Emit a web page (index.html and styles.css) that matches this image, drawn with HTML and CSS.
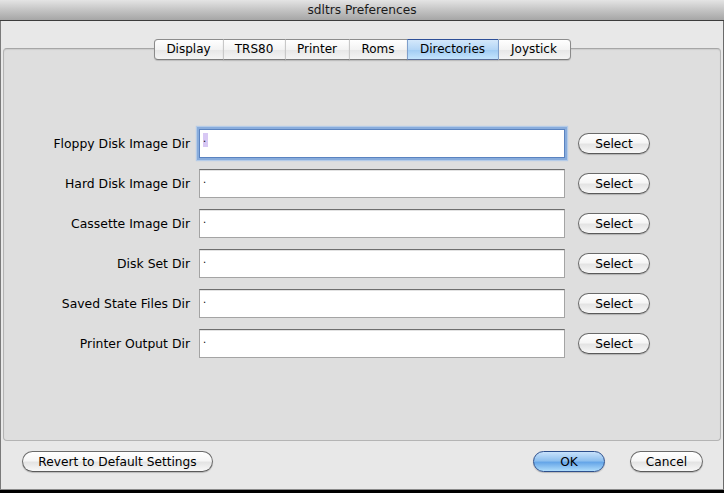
FILE: index.html
```html
<!DOCTYPE html>
<html>
<head>
<meta charset="utf-8">
<title>sdltrs Preferences</title>
<link rel="stylesheet" href="styles.css">
</head>
<body>
<div class="window">
  <div class="titlebar">sdltrs Preferences</div>
  <div class="body">
    <div class="panel">
      <div class="tabs">
        <div class="tab">Display</div>
        <div class="tab">TRS80</div>
        <div class="tab">Printer</div>
        <div class="tab">Roms</div>
        <div class="tab active">Directories</div>
        <div class="tab">Joystick</div>
      </div>
      <div class="rows">
        <div class="row">
          <label class="label">Floppy Disk Image Dir</label>
          <div class="field focused"><span class="sel">.</span></div>
          <button class="btn">Select</button>
        </div>
        <div class="row">
          <label class="label">Hard Disk Image Dir</label>
          <div class="field"><span class="val">.</span></div>
          <button class="btn">Select</button>
        </div>
        <div class="row">
          <label class="label">Cassette Image Dir</label>
          <div class="field"><span class="val">.</span></div>
          <button class="btn">Select</button>
        </div>
        <div class="row">
          <label class="label">Disk Set Dir</label>
          <div class="field"><span class="val">.</span></div>
          <button class="btn">Select</button>
        </div>
        <div class="row">
          <label class="label">Saved State Files Dir</label>
          <div class="field"><span class="val">.</span></div>
          <button class="btn">Select</button>
        </div>
        <div class="row">
          <label class="label">Printer Output Dir</label>
          <div class="field"><span class="val">.</span></div>
          <button class="btn">Select</button>
        </div>
      </div>
    </div>
    <div class="footer">
      <button class="btn revert">Revert to Default Settings</button>
      <div class="spacer"></div>
      <button class="btn primary ok">OK</button>
      <button class="btn cancel">Cancel</button>
    </div>
  </div>
</div>
</body>
</html>
```

FILE: styles.css
```css
html, body {
  margin: 0;
  padding: 0;
}
body {
  width: 724px;
  height: 493px;
  background: #000;
  font-family: "DejaVu Sans", "Liberation Sans", sans-serif;
  color: #000;
  overflow: hidden;
}
.window {
  width: 724px;
  height: 490px;
  box-sizing: border-box;
  background: #e8e8e8;
  border-left: 1px solid #7a7a7a;
  border-right: 1px solid #6a6a6a;
  border-bottom: 1px solid #8a8a8a;
  display: flex;
  flex-direction: column;
}
.titlebar {
  height: 20px;
  line-height: 21px;
  text-align: center;
  font-size: 12.2px;
  color: #1a1a1a;
  background: linear-gradient(#e4e4e4, #c4c4c4 50%, #a6a6a6);
  border-bottom: 1px solid #3c3c3c;
  margin-left: -1px;
  margin-right: -1px;
}
.body {
  flex: 1;
  display: flex;
  flex-direction: column;
  padding: 27px 2px 0 2px;
}
.panel {
  height: 393px;
  box-sizing: border-box;
  background: #dedede;
  border: 1px solid #b4b4b4;
  border-top-color: #a6a6a6;
  border-radius: 4px;
  box-shadow: inset 0 1px 1px rgba(0,0,0,0.08);
}
.tabs {
  display: flex;
  justify-content: center;
  margin-top: -10px;
}
.tab {
  height: 19px;
  line-height: 19px;
  font-size: 12px;
  text-align: center;
  background: linear-gradient(#ffffff, #f3f3f3 50%, #e6e6e6 51%, #f4f4f4);
  border-top: 1px solid #8c8c8c;
  border-bottom: 1px solid #7c7c7c;
  border-left: 1px solid #c8c8c8;
  box-shadow: 0 1px 1px rgba(0,0,0,0.15);
}
.tab:nth-child(1) { width: 68px; border-left: 1px solid #8a8a8a; border-radius: 4px 0 0 4px; }
.tab:nth-child(2) { width: 61px; }
.tab:nth-child(3) { width: 63px; }
.tab:nth-child(4) { width: 57px; }
.tab:nth-child(5) { width: 90px; }
.tab:nth-child(6) { width: 71px; border-right: 1px solid #8a8a8a; border-radius: 0 4px 4px 0; }
.tab.active {
  background: linear-gradient(#d4e8fb, #b4d6f6 50%, #9fcaf2 51%, #c4e4fd);
  border-top-color: #2e4f97;
  border-bottom-color: #5a6e98;
  border-left-color: #7f9fcb;
}
.tab.active + .tab { border-left-color: #7f9fcb; }
.rows {
  display: flex;
  flex-direction: column;
  gap: 11px;
  margin-top: 69px;
}
.row {
  display: flex;
  align-items: center;
  height: 29px;
}
.label {
  width: 186px;
  text-align: right;
  font-size: 12.4px;
  margin-right: 9px;
}
.field {
  width: 366px;
  height: 29px;
  box-sizing: border-box;
  background: #fff;
  border: 1px solid #a4a4a4;
  border-top-color: #6e6e6e;
  box-shadow: inset 0 1px 0 #e2e2e2;
  font-size: 10px;
  line-height: 14px;
  padding: 3px 0 0 3px;
}
.field.focused {
  border: 1px solid #5a83c0;
  box-shadow: 0 0 0 2px #88acdc, 0 0 1px 3px #b4cbe8;
  padding: 2px 0 0 3px;
}
.sel {
  display: inline-block;
  width: 5px;
  height: 14px;
  background: #d8c8f4;
  line-height: 12px;
}
.val {
  display: inline-block;
  line-height: 12px;
}
.btn {
  font-family: inherit;
  font-size: 12.2px;
  color: #000;
  height: 21px;
  box-sizing: border-box;
  padding: 0;
  border: 1px solid #6a6a6a;
  border-bottom-color: #5a5a5a;
  border-radius: 11px;
  background: linear-gradient(#ffffff, #f6f6f6 45%, #e4e4e4 55%, #f8f8f8);
  box-shadow: 0 1px 1px rgba(0,0,0,0.2);
}
.row .btn {
  width: 72px;
  margin-left: 13px;
}
.footer {
  display: flex;
  align-items: center;
  padding: 10px 18px 0 19px;
}
.spacer { flex: 1; }
.revert { width: 191px; }
.ok {
  width: 72px;
  margin-right: 25px;
}
.cancel { width: 73px; }
.btn.primary {
  border-color: #2d4f8c;
  background: linear-gradient(#c8e2fb, #8fc0ef 45%, #66a6e8 55%, #aedcfb);
}
```
